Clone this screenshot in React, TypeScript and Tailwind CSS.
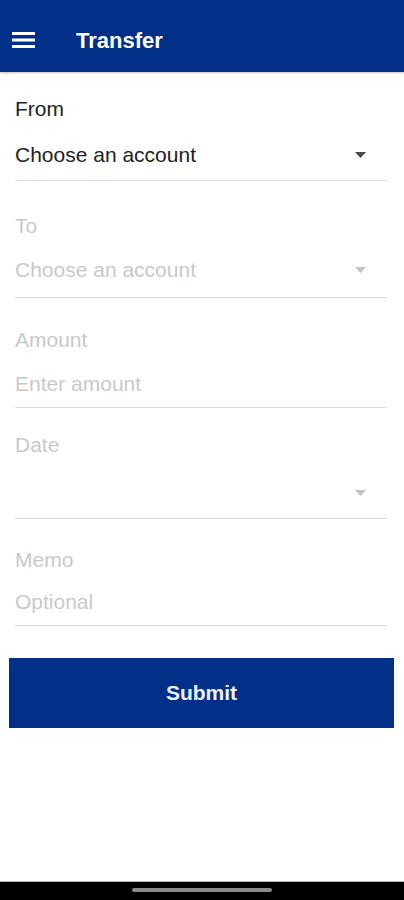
import React from 'react'

const font = { fontFamily: '"Liberation Sans", Arial, sans-serif' }

const Caret = ({ dark }: { dark?: boolean }) => (
  <svg width="11" height="6" viewBox="0 0 11 6" className="mr-[21px]">
    <path d="M0 0h11L5.5 6z" fill={dark ? '#4a4a4a' : '#c2c2c2'} />
  </svg>
)

export default function App() {
  return (
    <div className="flex h-[900px] flex-col bg-white" style={font}>
      {/* Top bar */}
      <header className="flex h-[72px] items-center bg-[#023089] pt-[10px] shadow-[0_1px_2px_rgba(0,0,0,0.25)]">
        <svg width="24" height="16" viewBox="0 0 24 16" className="ml-[12px] mt-[-2px]">
          <rect x="0" y="0" width="23" height="3" fill="#fff" />
          <rect x="0" y="6.5" width="23" height="3" fill="#fff" />
          <rect x="0" y="13" width="23" height="3" fill="#fff" />
        </svg>
        <h1 className="ml-[40px] text-[22px] font-bold leading-none text-white">Transfer</h1>
      </header>

      <main className="flex-1">
        <div className="pl-[15px] pr-[17px] text-[21px] leading-[24px]">
          {/* From */}
          <div className="border-b border-[#dcdcdc] pt-[25px] pb-[13px]">
            <div className="h-6 text-[#222]">From</div>
            <div className="mt-[22px] flex h-6 items-center justify-between">
              <span className="text-[#222]">Choose an account</span>
              <Caret dark />
            </div>
          </div>

          {/* To */}
          <div className="border-b border-[#dcdcdc] pt-[33px] pb-[15px]">
            <div className="h-6 text-[#c9c9c9]">To</div>
            <div className="mt-[20px] flex h-6 items-center justify-between">
              <span className="text-[#c9c9c9]">Choose an account</span>
              <Caret />
            </div>
          </div>

          {/* Amount */}
          <div className="border-b border-[#dcdcdc] pt-[30px] pb-[11px]">
            <div className="h-6 text-[#c9c9c9]">Amount</div>
            <div className="mt-[20px] h-6 text-[#c9c9c9]">Enter amount</div>
          </div>

          {/* Date */}
          <div className="border-b border-[#dcdcdc] pt-[25px] pb-[13px]">
            <div className="h-6 text-[#c9c9c9]">Date</div>
            <div className="mt-[24px] flex h-6 items-center justify-end">
              <Caret />
            </div>
          </div>

          {/* Memo */}
          <div className="border-b border-[#dcdcdc] pt-[29px] pb-[11px]">
            <div className="h-6 text-[#c9c9c9]">Memo</div>
            <div className="mt-[18px] h-6 text-[#c9c9c9]">Optional</div>
          </div>
        </div>

        <div className="mt-[32px] pl-[9px] pr-[10px]">
          <button className="flex h-[70px] w-full items-center justify-center bg-[#023089] text-[21px] font-bold text-[#eef0f7]">
            Submit
          </button>
        </div>
      </main>

      {/* System nav bar */}
      <div className="flex h-[19px] justify-center border-t border-[#b5b5b5] bg-black">
        <div className="mt-[6px] h-[4px] w-[140px] rounded-full bg-[#8a8a8a]" />
      </div>
    </div>
  )
}
